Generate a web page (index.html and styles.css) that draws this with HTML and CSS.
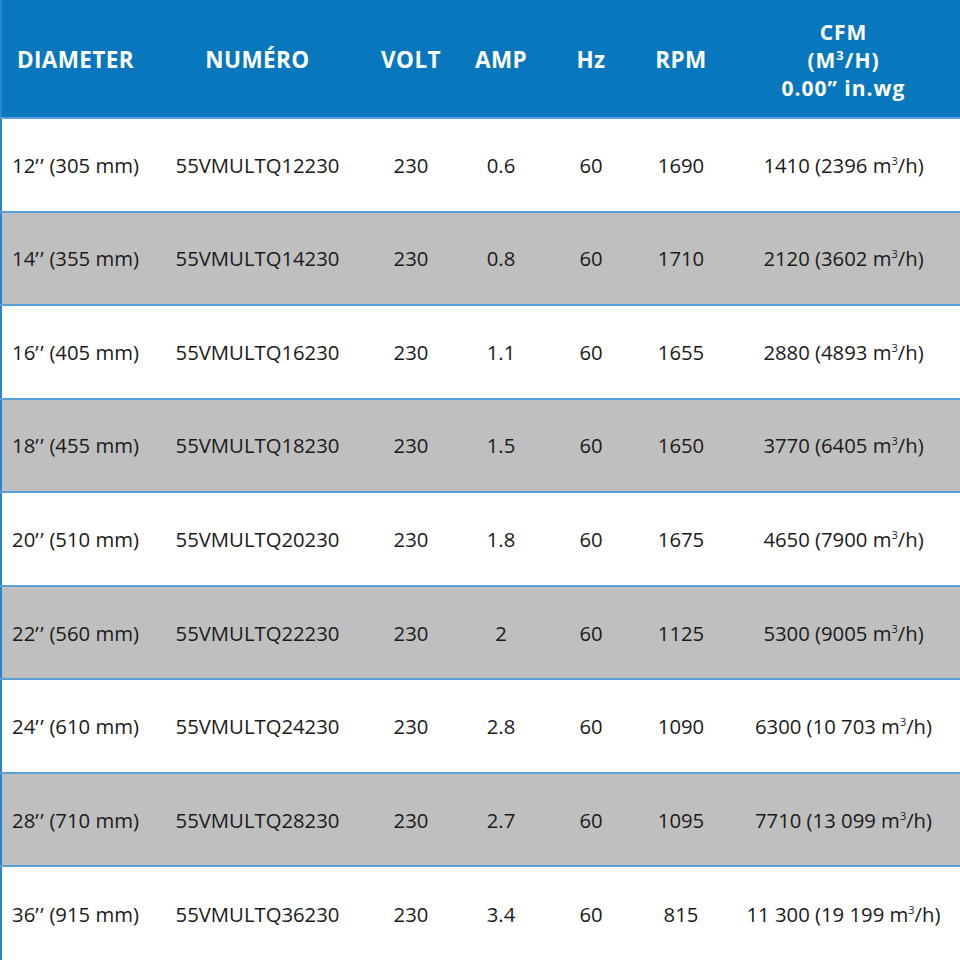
FILE: index.html
```html
<!DOCTYPE html>
<html lang="fr">
<head>
<meta charset="utf-8">
<link rel="stylesheet" href="styles.css">
</head>
<body>
<table class="specs">
  <colgroup>
    <col class="c-dia"><col class="c-num"><col class="c-sm"><col class="c-sm"><col class="c-sm"><col class="c-sm"><col class="c-cfm">
  </colgroup>
  <thead>
    <tr>
      <th>DIAMETER</th>
      <th>NUMÉRO</th>
      <th>VOLT</th>
      <th>AMP</th>
      <th>Hz</th>
      <th>RPM</th>
      <th class="multi">CFM<br>(M<sup>3</sup>/H)<br>0.00” in.wg</th>
    </tr>
  </thead>
  <tbody>
    <tr><td>12<span class="q">’’</span> (305 mm)</td><td>55VMULTQ12230</td><td>230</td><td>0.6</td><td>60</td><td>1690</td><td>1410 (2396 m<sup>3</sup>/h)</td></tr>
    <tr class="alt"><td>14<span class="q">’’</span> (355 mm)</td><td>55VMULTQ14230</td><td>230</td><td>0.8</td><td>60</td><td>1710</td><td>2120 (3602 m<sup>3</sup>/h)</td></tr>
    <tr><td>16<span class="q">’’</span> (405 mm)</td><td>55VMULTQ16230</td><td>230</td><td>1.1</td><td>60</td><td>1655</td><td>2880 (4893 m<sup>3</sup>/h)</td></tr>
    <tr class="alt"><td>18<span class="q">’’</span> (455 mm)</td><td>55VMULTQ18230</td><td>230</td><td>1.5</td><td>60</td><td>1650</td><td>3770 (6405 m<sup>3</sup>/h)</td></tr>
    <tr><td>20<span class="q">’’</span> (510 mm)</td><td>55VMULTQ20230</td><td>230</td><td>1.8</td><td>60</td><td>1675</td><td>4650 (7900 m<sup>3</sup>/h)</td></tr>
    <tr class="alt"><td>22<span class="q">’’</span> (560 mm)</td><td>55VMULTQ22230</td><td>230</td><td>2</td><td>60</td><td>1125</td><td>5300 (9005 m<sup>3</sup>/h)</td></tr>
    <tr><td>24<span class="q">’’</span> (610 mm)</td><td>55VMULTQ24230</td><td>230</td><td>2.8</td><td>60</td><td>1090</td><td>6300 (10 703 m<sup>3</sup>/h)</td></tr>
    <tr class="alt"><td>28<span class="q">’’</span> (710 mm)</td><td>55VMULTQ28230</td><td>230</td><td>2.7</td><td>60</td><td>1095</td><td>7710 (13 099 m<sup>3</sup>/h)</td></tr>
    <tr><td>36<span class="q">’’</span> (915 mm)</td><td>55VMULTQ36230</td><td>230</td><td>3.4</td><td>60</td><td>815</td><td>11 300 (19 199 m<sup>3</sup>/h)</td></tr>
  </tbody>
</table>
</body>
</html>
```

FILE: styles.css
```css
html, body {
  margin: 0;
  padding: 0;
  background: #ffffff;
}

.specs {
  width: 960px;
  height: 960px;
  border-collapse: collapse;
  table-layout: fixed;
  font-family: "Open Sans", "Noto Sans", sans-serif;
  color: #1a1a1a;
  border-left: 2px solid #2a86cc;
}

.c-dia { width: 148px; }
.c-num { width: 217px; }
.c-sm { width: 90px; }
.c-cfm { width: 235px; }

.specs th,
.specs td {
  padding: 0;
  text-align: center;
  vertical-align: middle;
  white-space: nowrap;
}

.specs thead tr {
  height: 118px;
  background: #0877bd;
}

.specs th {
  color: #ffffff;
  font-weight: 700;
  font-size: 22.5px;
  line-height: 28px;
  letter-spacing: 0.4px;
  padding-top: 3px;
}

.specs th.multi {
  font-size: 21px;
  line-height: 28px;
  letter-spacing: 1px;
  padding-top: 2px;
}

.specs th sup {
  font-size: 13px;
  line-height: 0;
  vertical-align: 8px;
}

.specs tbody tr {
  height: 93px;
  border-top: 2px solid #5b9fd8;
}

.specs tbody tr.alt {
  background: #bfbfbf;
}

.specs td {
  font-size: 20.3px;
  font-weight: 400;
}

.specs td .q {
  letter-spacing: 1.5px;
  margin-right: -1px;
}

.specs td sup {
  font-size: 11px;
  line-height: 0;
  vertical-align: 8px;
}
```
